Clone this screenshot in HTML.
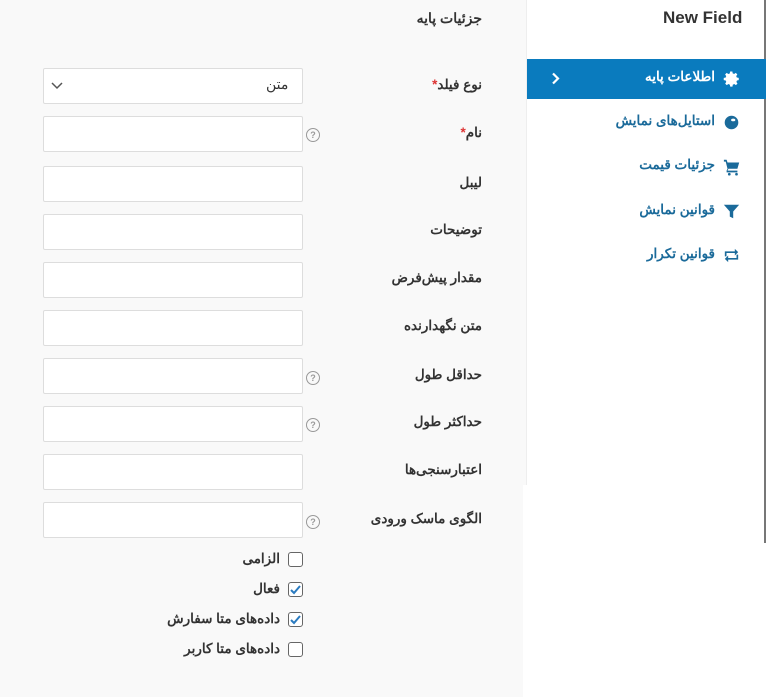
<!DOCTYPE html>
<html><head><meta charset="utf-8"><style>
*{box-sizing:border-box;margin:0;padding:0}
body{width:767px;height:697px;background:#fff;position:relative;overflow:hidden;font-family:"Liberation Sans","Noto Sans CJK SC",sans-serif;color:#333}
.gray1{position:absolute;left:0;top:0;width:527px;height:485px;background:#f9f9f9;border-right:1px solid #eee}
.gray2{position:absolute;left:0;top:485px;width:523px;height:212px;background:#f9f9f9}
.side{position:absolute;left:527px;top:0;width:239px;height:543px;border-right:2px solid #777;background:#fff}
.lbl{position:absolute;right:285px;font-size:13.5px;font-weight:bold;direction:rtl;white-space:nowrap;color:#333}
.inp{position:absolute;left:43px;width:260px;height:36px;background:#fff;border:1px solid #ddd;border-radius:2px}
.help{position:absolute;left:306px;width:14px;height:14px;border:1.3px solid #999;border-radius:50%;font-size:9px;color:#999;text-align:center;line-height:12px;font-weight:bold}
.req{color:#d33}
.cb{position:absolute;left:288px;width:15px;height:15px;border:1px solid #666;border-radius:3px;background:#fff}
.cbl{position:absolute;right:487px;font-size:13.5px;font-weight:bold;direction:rtl;white-space:nowrap}
.item{position:absolute;right:52px;font-size:13.5px;font-weight:bold;color:#1a6a9a;direction:rtl;white-space:nowrap}
.ico{position:absolute;left:723px}
</style></head><body>
<div class="gray1"></div><div class="gray2"></div>
<div class="side"></div>
<div style="position:absolute;right:285px;top:10px;font-size:14px;font-weight:bold;direction:rtl">جزئیات پایه</div>
<div style="position:absolute;left:663px;top:8px;font-size:17px;font-weight:bold;color:#333">New Field</div>
<div style="position:absolute;left:527px;top:59px;width:239px;height:40px;background:#0a7bbe"></div>
<svg style="position:absolute;left:551px;top:72px" width="9" height="13" viewBox="0 0 9 13"><path d="M2 1.5l5 5-5 5" stroke="#fff" stroke-width="2.2" fill="none"/></svg>
<div class="item" style="top:69px;color:#fff">اطلاعات پایه</div>
<svg class="ico" style="top:70px" width="18" height="18" viewBox="0 0 24 24"><path fill="#fff" d="M12 8a4 4 0 100 8 4 4 0 000-8zm9 5.5v-3l-2.6-.5a7 7 0 00-.8-1.9l1.5-2.2-2.1-2.1-2.2 1.5a7 7 0 00-1.9-.8L12.5 2h-3l-.5 2.6a7 7 0 00-1.9.8L4.9 3.9 2.8 6l1.5 2.2a7 7 0 00-.8 1.9L1 10.5v3l2.6.5a7 7 0 00.8 1.9l-1.5 2.2 2.1 2.1 2.2-1.5a7 7 0 001.9.8l.5 2.6h3l.5-2.6a7 7 0 001.9-.8l2.2 1.5 2.1-2.1-1.5-2.2a7 7 0 00.8-1.9z"/></svg>
<div class="item" style="top:113px">استایل‌های نمایش</div>
<svg class="ico" style="top:114px" width="17" height="17" viewBox="0 0 20 20"><circle cx="10" cy="10" r="8" fill="#1a6a9a"/><ellipse cx="12" cy="7" rx="2.5" ry="1.6" fill="#fff"/></svg>
<div class="item" style="top:157px">جزئیات قیمت</div>
<svg class="ico" style="top:158px" width="18" height="18" viewBox="0 0 20 20"><path fill="#1a6a9a" d="M1 2h3l1 3h13l-2 7H6l-1 2h11v2H4v-2l1-2L3 4H1z"/><circle cx="7" cy="18" r="1.5" fill="#1a6a9a"/><circle cx="15" cy="18" r="1.5" fill="#1a6a9a"/></svg>
<div class="item" style="top:202px">قوانین نمایش</div>
<svg class="ico" style="top:203px" width="17" height="17" viewBox="0 0 20 20"><path fill="#1a6a9a" d="M1 2h18l-7 8v8l-4-2v-6z"/></svg>
<div class="item" style="top:246px">قوانین تکرار</div>
<svg class="ico" style="top:248px" width="17" height="15" viewBox="0 0 20 18"><path fill="#1a6a9a" d="M2 4h12V1l4 4-4 4V6H4v4H2zM18 14H6v3l-4-4 4-4v3h10V8h2z"/></svg>

<div class="inp" style="top:68px"></div>
<div style="position:absolute;left:266px;top:76px;font-size:14px;direction:rtl">متن</div>
<svg style="position:absolute;left:51px;top:82px" width="12" height="8" viewBox="0 0 12 8"><path d="M1 1l5 5 5-5" stroke="#555" stroke-width="1.5" fill="none"/></svg>
<div class="lbl" style="top:77px">نوع فیلد<span class="req">*</span></div>
<div class="inp" style="top:116px"></div><div class="help" style="top:128px">?</div>
<div class="lbl" style="top:125px">نام<span class="req">*</span></div>
<div class="inp" style="top:166px"></div><div class="lbl" style="top:175px">لیبل</div>
<div class="inp" style="top:214px"></div><div class="lbl" style="top:222px">توضیحات</div>
<div class="inp" style="top:262px"></div><div class="lbl" style="top:270px">مقدار پیش‌فرض</div>
<div class="inp" style="top:310px"></div><div class="lbl" style="top:318px">متن نگهدارنده</div>
<div class="inp" style="top:358px"></div><div class="help" style="top:371px">?</div><div class="lbl" style="top:367px">حداقل طول</div>
<div class="inp" style="top:406px"></div><div class="help" style="top:418px">?</div><div class="lbl" style="top:414px">حداکثر طول</div>
<div class="inp" style="top:454px"></div><div class="lbl" style="top:462px">اعتبارسنجی‌ها</div>
<div class="inp" style="top:502px"></div><div class="help" style="top:515px">?</div><div class="lbl" style="top:511px">الگوی ماسک ورودی</div>

<div class="cb" style="top:552px"></div><div class="cbl" style="top:551px">الزامی</div>
<div class="cb" style="top:582px"><svg width="13" height="13" viewBox="0 0 13 13"><path d="M2 7l3 3 6-7" stroke="#2b7bc0" stroke-width="2" fill="none"/></svg></div><div class="cbl" style="top:581px">فعال</div>
<div class="cb" style="top:612px"><svg width="13" height="13" viewBox="0 0 13 13"><path d="M2 7l3 3 6-7" stroke="#2b7bc0" stroke-width="2" fill="none"/></svg></div><div class="cbl" style="top:611px">داده‌های متا سفارش</div>
<div class="cb" style="top:642px"></div><div class="cbl" style="top:641px">داده‌های متا کاربر</div>
</body></html>
